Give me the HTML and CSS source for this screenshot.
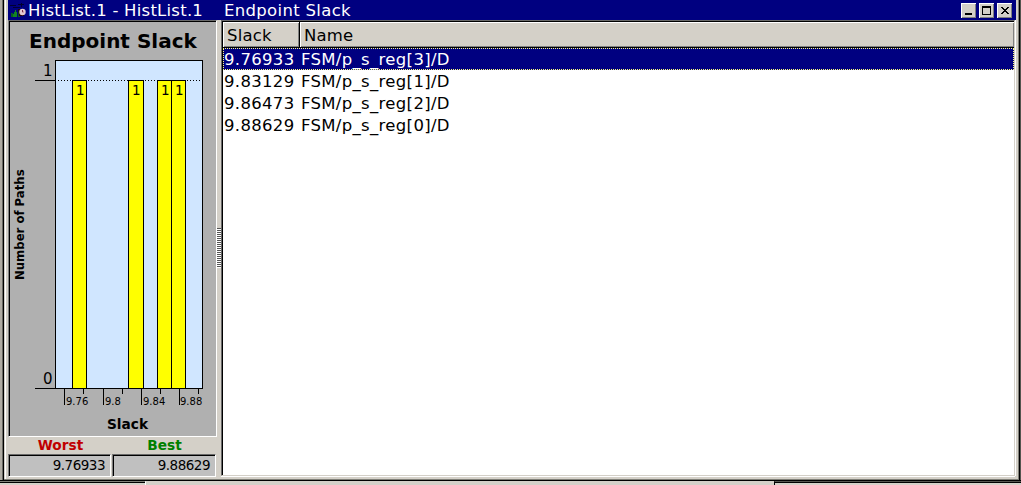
FILE: index.html
```html
<!DOCTYPE html>
<html lang="en">
<head>
<meta charset="utf-8">
<title>HistList.1</title>
<link rel="stylesheet" href="styles.css">
</head>
<body>
<div class="window">
  <header class="titlebar">
    <svg class="app-icon" width="19" height="20" viewBox="0 0 19 20">
      <path d="M3 13h2v4H3zM10 11h2v6h-2z" fill="#075b22"/>
      <path d="M5 14h1v-2h1v-2h1v2h1v5H5z" fill="#128222"/>
      <path d="M2 5.500h6M10 4.500h6M13.500 3v4M5 7.500h7" stroke="#000030" fill="none"/>
      <path d="M10 9h3v6h3v1h-5z" fill="#24000c"/>
      <circle cx="14.500" cy="12" r="3.200" fill="#e5c8d0"/>
      <path d="M14.500 10v2h1" stroke="#81324a" fill="none"/>
    </svg>
    <span class="title-main">HistList.1 - HistList.1</span>
    <span class="title-sub">Endpoint Slack</span>
    <div class="controls">
      <span class="control"><svg width="15" height="15"><path d="M4 10h7v2H4z"/></svg></span>
      <span class="control"><svg width="15" height="15"><path d="M3 3h9v9H3zM4 5v6h7V5z" fill-rule="evenodd"/></svg></span>
      <span class="control"><svg width="15" height="15" shape-rendering="crispEdges"><path d="M4 4h2v1h1v1h2V5h1V4h2v1h-1v1h-1v1H9v1h1v1h1v1h1v1h-2v-1H9V9H7v1H6v1H4v-1h1V9h1V8h1V7H6V6H5V5H4z"/></svg></span>
    </div>
  </header>
  <main class="content">
    <section class="left-pane">
      <div class="chart">
        <svg width="206" height="413" viewBox="10 22 206 413">
          <text class="chart-title" x="29" y="48">Endpoint Slack</text>
          <g shape-rendering="crispEdges">
            <rect x="55.5" y="60.5" width="147" height="328" fill="#d0e6ff" stroke="#000"/>
            <path d="M35 80.5h21M35 388.5h21" stroke="#000"/>
            <path d="M58 80.5h144" stroke="#000" stroke-dasharray="1 2"/>
            <g fill="#ff0" stroke="#000">
              <rect x="72.5" y="80.5" width="14" height="308"/>
              <rect x="128.5" y="80.5" width="15" height="308"/>
              <rect x="157.5" y="80.5" width="14" height="308"/>
              <rect x="171.5" y="80.5" width="14" height="308"/>
            </g>
            <path d="M64.5 388v17M103.5 388v17M141.5 388v17M179.5 388v17M83.5 388v6M122.5 388v6M160.5 388v6M198.5 388v6" stroke="#000"/>
          </g>
          <g class="bar-labels"><text x="76" y="95">1</text><text x="132" y="95">1</text><text x="161" y="95">1</text><text x="175" y="95">1</text></g>
          <g class="y-labels"><text x="43" y="76">1</text><text x="43" y="384">0</text></g>
          <g class="x-labels"><text x="66" y="405">9.76</text><text x="105" y="405">9.8</text><text x="143" y="405">9.84</text><text x="180" y="405">9.88</text></g>
          <text class="axis-title" x="107" y="429">Slack</text>
          <text class="y-title" transform="translate(24 280) rotate(-90)">Number of Paths</text>
        </svg>
      </div>
      <div class="summary">
        <div class="worst">Worst</div><div class="best">Best</div>
        <div class="field">9.76933</div><div class="field">9.88629</div>
      </div>
    </section>
    <div class="splitter"><i class="grip"></i></div>
    <section class="list">
      <div class="list-head"><span class="head-slack">Slack</span><span class="head-name">Name</span></div>
      <div class="row selected"><span>9.76933</span><span>FSM/p_s_reg[3]/D</span></div>
      <div class="row"><span>9.83129</span><span>FSM/p_s_reg[1]/D</span></div>
      <div class="row"><span>9.86473</span><span>FSM/p_s_reg[2]/D</span></div>
      <div class="row"><span>9.88629</span><span>FSM/p_s_reg[0]/D</span></div>
    </section>
  </main>
</div>
<div class="behind"><i class="behind-left"></i><i class="behind-mid"></i><i class="behind-right"></i></div>
</body>
</html>
```
FILE: styles.css
```css
* { box-sizing: border-box; }
body {
  margin: 0; width: 1021px; height: 485px; overflow: hidden;
  background: #d4d0c8; color: #000;
  font: 16.49px "DejaVu Sans", sans-serif;
}
.window {
  height: 480px; padding: 0 5px 3px 8px;
  background:
    linear-gradient(#808078, #808078) 4px 479px / 1015px 1px no-repeat,
    linear-gradient(90deg, #b0aca4 0 2px, #696963 2px 3px, #000 3px 4px, #d4d0c8 4px 5px, #fff 5px 6px, #d4d0c8 6px 1018px, #808078 1018px 1019px, #000 1019px 1020px, #55554f 1020px);
}
.titlebar { height: 20px; display: flex; align-items: center; background: #000080; color: #fff; white-space: nowrap; }
.app-icon { margin-right: 1px; flex: none; }
.title-main { width: 196px; letter-spacing: .24px; }
.title-sub { letter-spacing: .33px; }
.controls { margin-left: auto; margin-right: 4px; display: flex; gap: 3px; }
.control { width: 15px; height: 15px; background: #d4d0c8; box-shadow: inset 1px 1px #fff, inset -1px -1px #808080; }
.control svg { display: block; }
.content { height: 457px; display: flex; }
.left-pane { width: 209px; }
.chart { height: 417px; border: 1px solid #808080; border-top-color: #696969; border-right-color: #fff; border-bottom-color: #fff; background: #b0b0b0; box-shadow: inset 1px 1px #000; padding: 1px; }
.chart svg { display: block; }
.chart-title { font-size: 20px; font-weight: bold; }
.bar-labels { font-size: 13.5px; }
.y-labels { font-size: 15px; }
.x-labels { font-size: 10px; }
.axis-title { font-size: 13.7px; font-weight: bold; }
.y-title { font-size: 11.7px; font-weight: bold; }
.summary { display: grid; grid-template-columns: 103px 104px; grid-template-rows: 17px 23px; gap: 0 1px; font-size: 13.5px; line-height: 17px; text-align: center; }
.worst, .best { font-size: 13.7px; font-weight: bold; }
.worst { color: #c00000; padding-left: 2px; }
.best { color: #008000; padding-left: 1px; }
.field { border: 1px solid #fff; border-top-color: #696969; border-left-color: #808080; box-shadow: inset 1px 1px #000; background: #c0c0c0; text-align: right; padding: 1px 5px 0 0; line-height: 19px; letter-spacing: -.5px; }
.splitter { width: 4px; display: flex; align-items: center; }
.grip { height: 40px; width: 4px; margin-bottom: 2px; background: repeating-linear-gradient(#555 0 1px, #fff 1px 2px); }
.list { width: 794px; height: 456px; border: 1px solid #d4d0c8; border-top-color: #696969; border-left-color: #696969; box-shadow: inset 1px 1px #000, 1px 0 #fff, 0 1px #fff; background: #fff; padding: 1px 0 0 1px; }
.list-head { height: 26px; display: flex; background: #d4d0c8; border-bottom: 1px solid #000; line-height: 27px; letter-spacing: .2px; }
.head-slack { width: 77px; padding-left: 4px; border-right: 1px solid #000; box-shadow: inset 1px 1px #fff, inset -1px -1px #808080; }
.head-name { flex: 1; padding-left: 4px; box-shadow: inset 1px 1px #fff, inset -1px -1px #808080; }
.row { height: 22px; line-height: 24px; display: grid; grid-template-columns: 77px 1fr; padding-left: 1px; letter-spacing: .33px; }
.selected { background: #000080; color: #fff; outline: 1px dotted #ffff7f; outline-offset: -1px; }
.behind { height: 5px; display: flex; border-top: 1px solid #000; }
.behind-left { width: 145px; border-top: 1px solid #808078; border-bottom: 2px solid #d4d0c8; box-shadow: inset 0 1px #000; }
.behind-mid { width: 629px; border-top: 1px solid #d4d0c8; border-left: 1px solid #fff; }
.behind-right { flex: 1; border-top: 1px solid #55554f; border-left: 1px solid #000; box-shadow: inset 0 1px #000; }
```
